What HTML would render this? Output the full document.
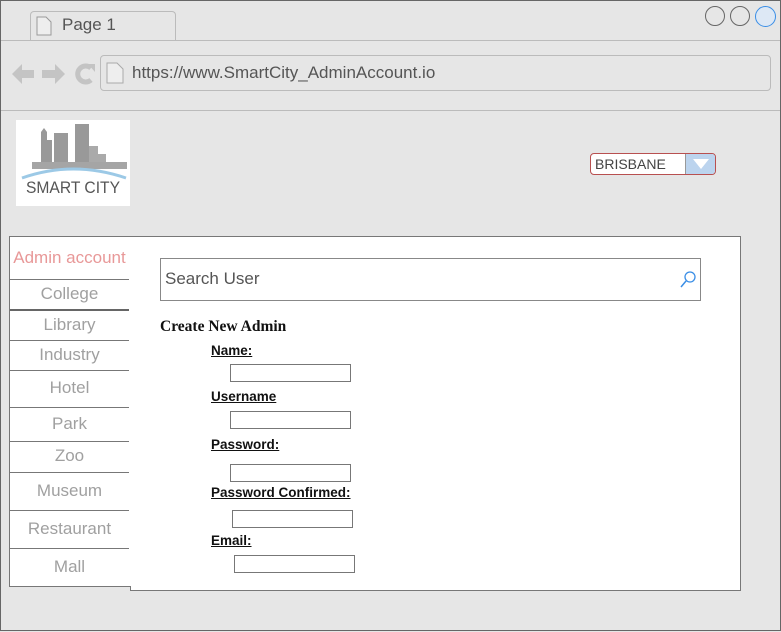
<!DOCTYPE html>
<html><head><style>
*{margin:0;padding:0;box-sizing:border-box}
body{width:781px;height:632px;background:#e6e6e6;font-family:"Liberation Sans",sans-serif;position:relative;overflow:hidden}
.a{position:absolute}
.frame{left:0;top:0;width:781px;height:631px;border:1px solid #666}
.nav div{position:absolute;left:0;width:119px;border-bottom:1px solid #777;text-align:center;color:#a0a0a0;font-size:17px}
.lbl{position:absolute;left:211px;font-size:13.5px;font-weight:bold;text-decoration:underline;color:#111}
.inp{position:absolute;width:121px;height:18px;border:1px solid #777;background:#fff}
</style></head><body>
<div class="a frame"></div>
<div class="a" style="left:30px;top:11px;width:146px;height:30px;border:1px solid #bbb;border-bottom:none;border-radius:4px 4px 0 0;background:#e6e6e6"></div>
<svg class="a" style="left:36px;top:16px" width="16" height="20"><path d="M1 1h9l5 5v13H1z" fill="#eee" stroke="#999"/></svg>
<div class="a" style="left:62px;top:15px;font-size:17px;color:#555">Page 1</div>
<div class="a" style="left:1px;top:40px;width:779px;height:1px;background:#bbb"></div>
<div class="a" style="left:705px;top:6px;width:20px;height:20px;border:1px solid #666;border-radius:50%"></div>
<div class="a" style="left:730px;top:6px;width:20px;height:20px;border:1px solid #666;border-radius:50%"></div>
<div class="a" style="left:755px;top:6px;width:21px;height:21px;border:1px solid #3a8ee6;border-radius:50%;background:#dde8f5"></div>
<svg class="a" style="left:10px;top:62px" width="88" height="24"><path d="M2 12l10-10v6h12v8H12v6z" fill="#c4c4c4"/><path d="M55 12l-10-10v6H32v8h13v6z" fill="#c4c4c4"/><path d="M81 6A8 8 0 1 0 81 18" fill="none" stroke="#c4c4c4" stroke-width="5"/><path d="M78 2h7v8z" fill="#c4c4c4"/></svg>
<div class="a" style="left:100px;top:55px;width:671px;height:36px;border:1px solid #bbb;border-radius:4px"></div>
<svg class="a" style="left:106px;top:62px" width="18" height="22"><path d="M1 1h10l6 6v14H1z" fill="#eee" stroke="#aaa"/></svg>
<div class="a" style="left:132px;top:63px;font-size:17px;color:#555">https://www.SmartCity_AdminAccount.io</div>
<div class="a" style="left:1px;top:110px;width:779px;height:1px;background:#bbb"></div>
<div class="a" style="left:16px;top:120px;width:114px;height:86px;background:#fff"></div>
<svg class="a" style="left:16px;top:120px" width="114" height="86"><path d="M25 20v-8l3-4 3 4v8z" fill="#999"/><rect x="25" y="20" width="11" height="22" fill="#999"/><rect x="38" y="13" width="14" height="29" fill="#9a9a9a"/><rect x="59" y="4" width="14" height="38" fill="#999"/><rect x="73" y="26" width="9" height="16" fill="#aaa"/><rect x="82" y="34" width="8" height="8" fill="#aaa"/><rect x="16" y="42" width="95" height="7" fill="#a5a5a5"/><path d="M6 58Q57 40 110 58" fill="none" stroke="#9cc9e6" stroke-width="3"/><text x="57" y="73" font-family="Liberation Sans,sans-serif" font-size="17" fill="#555" text-anchor="middle" textLength="94" lengthAdjust="spacingAndGlyphs">SMART CITY</text></svg>
<div class="a" style="left:590px;top:153px;width:126px;height:22px;border:1px solid #b85050;border-radius:4px;background:#fff;overflow:hidden"><span style="position:absolute;left:4px;top:2px;font-size:14px;color:#444">BRISBANE</span><div style="position:absolute;left:94px;top:0;width:32px;height:22px;background:#bcd4ee;border-left:1px solid #999"></div><svg style="position:absolute;left:102px;top:5px" width="16" height="10"><path d="M0 0h16L8 10z" fill="#fff"/></svg></div>
<div class="a" style="left:130px;top:236px;width:611px;height:355px;background:#fff;border:1px solid #777"></div>
<div class="a nav" style="left:9px;top:236px;width:122px;height:351px;border:1px solid #777;border-right:none;background:#fff">
<div style="top:0;height:43px;line-height:42px;color:#e89898">Admin account</div>
<div style="top:43px;height:31px;line-height:28px;border-bottom:2px solid #666">College</div>
<div style="top:74px;height:30px;line-height:28px">Library</div>
<div style="top:104px;height:30px;line-height:28px">Industry</div>
<div style="top:134px;height:37px;line-height:34px">Hotel</div>
<div style="top:171px;height:34px;line-height:32px">Park</div>
<div style="top:205px;height:31px;line-height:28px">Zoo</div>
<div style="top:236px;height:38px;line-height:36px">Museum</div>
<div style="top:274px;height:38px;line-height:36px">Restaurant</div>
<div style="top:312px;height:38px;line-height:36px;border-bottom:none">Mall</div>
</div>
<div class="a" style="left:160px;top:258px;width:541px;height:43px;border:1px solid #888"></div>
<div class="a" style="left:165px;top:269px;font-size:17px;color:#555">Search User</div>
<svg class="a" style="left:680px;top:270px" width="18" height="18"><circle cx="10" cy="7" r="5" fill="none" stroke="#3a8ee6" stroke-width="1.3"/><path d="M6 11L1 17" stroke="#3a8ee6" stroke-width="1.5"/></svg>
<div class="a" style="left:160px;top:318px;font-family:'Liberation Serif',serif;font-weight:bold;font-size:15.5px;color:#111">Create New Admin</div>
<div class="lbl" style="top:343px">Name:</div>
<div class="inp" style="left:230px;top:364px"></div>
<div class="lbl" style="top:389px">Username</div>
<div class="inp" style="left:230px;top:411px"></div>
<div class="lbl" style="top:437px">Password:</div>
<div class="inp" style="left:230px;top:464px"></div>
<div class="lbl" style="top:485px">Password Confirmed:</div>
<div class="inp" style="left:232px;top:510px"></div>
<div class="lbl" style="top:533px">Email:</div>
<div class="inp" style="left:234px;top:555px"></div>
</body></html>
